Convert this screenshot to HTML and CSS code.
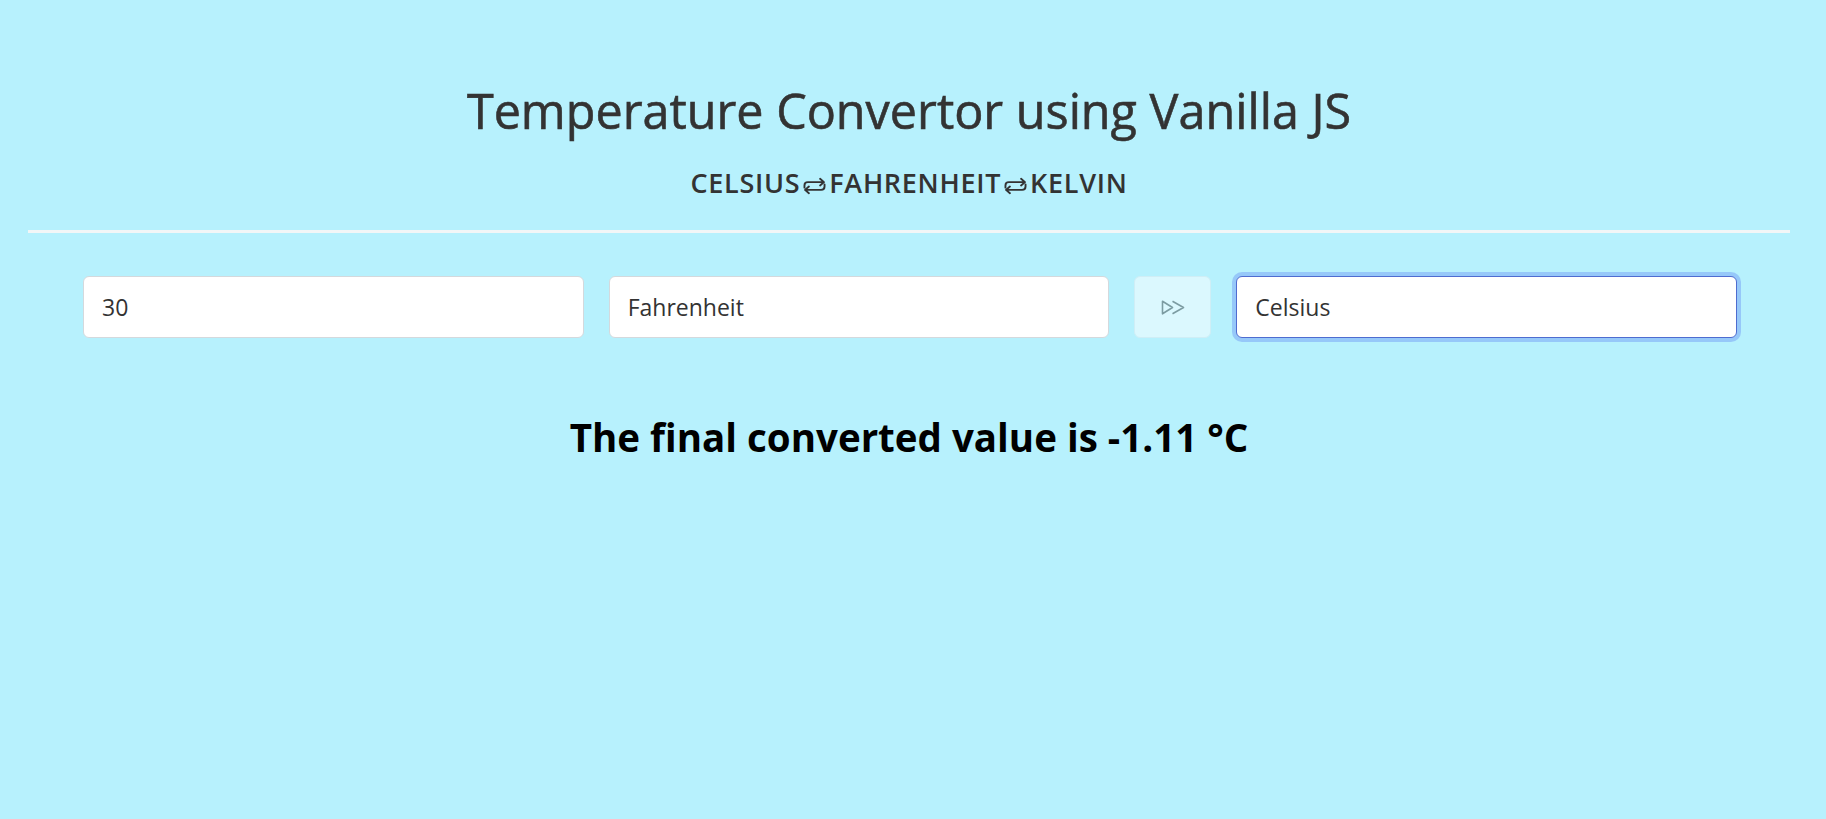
FILE: index.html
```html
<!DOCTYPE html>
<html lang="en">
<head>
<meta charset="utf-8">
<title>Temperature Convertor</title>
<link rel="stylesheet" href="styles.css">
</head>
<body>
<div class="page">
  <header class="header">
    <h1 class="title">Temperature Convertor using Vanilla JS</h1>
    <h5 class="subtitle">CELSIUS<svg class="swap" viewBox="0 0 26 16" width="29" height="18"><path d="M4 9.5V7.5Q4 4.5 7 4.5H21M18 1.5L21.5 4.5L18 7.5M22 6.5V8.5Q22 11.5 19 11.5H5M8 8.5L4.5 11.5L8 14.5" fill="none" stroke="#333" stroke-width="1.7" stroke-linecap="round" stroke-linejoin="round"/></svg>FAHRENHEIT<svg class="swap" viewBox="0 0 26 16" width="29" height="18"><path d="M4 9.5V7.5Q4 4.5 7 4.5H21M18 1.5L21.5 4.5L18 7.5M22 6.5V8.5Q22 11.5 19 11.5H5M8 8.5L4.5 11.5L8 14.5" fill="none" stroke="#333" stroke-width="1.7" stroke-linecap="round" stroke-linejoin="round"/></svg>KELVIN</h5>
  </header>
  <hr class="rule">
  <form class="row">
    <input class="field field-wide" type="text" value="30">
    <input class="field field-wide" type="text" value="Fahrenheit">
    <button class="go" type="button" disabled>
      <svg viewBox="0 0 24 15" width="24" height="15"><path d="M1.5 1.2L11.5 7.5L1.5 13.8Z M11.5 1.2L22.5 7.5L11.5 13.8" fill="none" stroke="#7c9ca2" stroke-width="1.6" stroke-linejoin="round"/></svg>
    </button>
    <input class="field field-wide field-focus" type="text" value="Celsius">
  </form>
  <h2 class="result">The final converted value is -1.11 °C</h2>
</div>
</body>
</html>
```

FILE: styles.css
```css
html, body {
  margin: 0;
  padding: 0;
}
body {
  background: #b7f1fd;
  font-family: "Open Sans", "Noto Sans", sans-serif;
  color: #333;
  min-height: 819px;
}
.page {
  width: 1818px;
  padding-top: 80px;
}
.header {
  text-align: center;
}
.title {
  margin: 0;
  font-size: 48.5px;
  font-weight: 400;
  line-height: 60px;
  color: #333;
  -webkit-text-stroke: 0.6px #333;
}
.subtitle {
  margin: 26px 0 0;
  font-size: 27px;
  font-weight: 600;
  line-height: 34px;
  letter-spacing: 0.7px;
  color: #333;
}
.swap {
  vertical-align: -2px;
}
.rule {
  margin: 30px 28px 0 28px;
  border: 0;
  border-top: 3px solid #f2f6f7;
  height: 0;
}
.row {
  display: flex;
  gap: 25px;
  margin: 43px 81px 0 83px;
}
.field {
  box-sizing: border-box;
  height: 62px;
  border: 1px solid #d4d9dd;
  border-radius: 6px;
  background: #fff;
  padding: 0 18px;
  font-family: inherit;
  font-size: 23px;
  color: #333;
  outline: none;
  min-width: 0;
}
.field-wide {
  flex: 1 1 0;
}
.field-focus {
  border-color: #4f6cd0;
  box-shadow: 0 0 0 4px rgba(110, 150, 245, 0.45);
}
.go {
  flex: 0 0 77px;
  height: 62px;
  border: 1px solid #cfeef6;
  border-radius: 6px;
  background: #dbf8fe;
  display: flex;
  align-items: center;
  justify-content: center;
  padding: 0;
}
.result {
  margin: 75px 0 0;
  text-align: center;
  font-size: 38.5px;
  font-weight: 700;
  line-height: 48px;
  color: #000;
}
```
